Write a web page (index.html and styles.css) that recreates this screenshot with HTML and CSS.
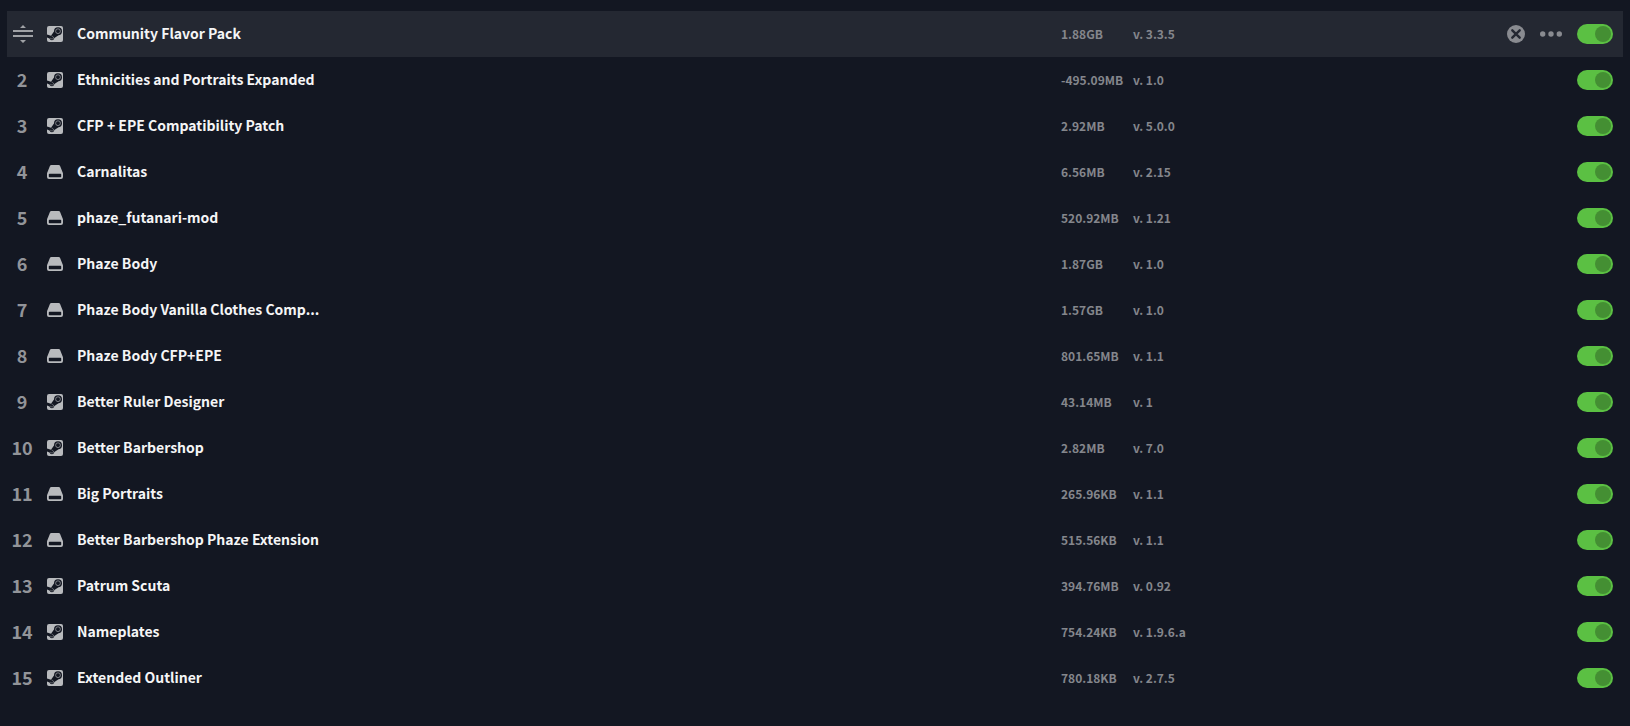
FILE: index.html
```
<!DOCTYPE html>
<html lang="en">
<head>
  <meta charset="utf-8">
  <title>Playset</title>
  <link rel="stylesheet" href="styles.css">
</head>
<body>
  <svg class="sprite" aria-hidden="true">
    <symbol id="steam" viewBox="0 0 16 16">
      <rect width="16" height="16" rx="2" fill="currentColor"/>
      <g class="cutout">
        <path d="M0 8.4 4 9.8 7 5.4 11.5 9.2 7.4 12A2.5 2.5 0 0 1 2.5 12.5L0 11.4Z"/>
        <circle cx="11" cy="5.2" r="4"/>
      </g>
      <circle cx="11" cy="5.2" r="2.4" fill="none" stroke="currentColor" stroke-width=".6"/>
      <path d="M3.2 12.2 4.7 12.9A1.3 1.3 0 0 0 5.7 10.5L4.6 10" fill="none" stroke="currentColor" stroke-width=".5"/>
    </symbol>
    <symbol id="drive" viewBox="0 0 16 16">
      <path fill="currentColor" fill-rule="evenodd" d="M4.4 1h7.2a1.6 1.6 0 0 1 1.5 1.1L15.7 8.6a3 3 0 0 1 .3 1.2V13a2 2 0 0 1-2 2H2a2 2 0 0 1-2-2V9.8a3 3 0 0 1 .3-1.2L2.9 2.1A1.6 1.6 0 0 1 4.4 1ZM2.5 9.8a.7.7 0 0 0-.7.7v2a.7.7 0 0 0 .7.7h11a.7.7 0 0 0 .7-.7v-2a.7.7 0 0 0-.7-.7Z"/>
    </symbol>
  </svg>

  <ul class="mod-list">
    <li class="mod active">
      <button class="drag-handle" aria-label="Reorder">
        <svg width="20" height="20" viewBox="0 0 20 20" fill="currentColor">
          <path d="M10 1 13 4H7ZM10 19 7 16H13ZM0 6h20v2H0ZM0 11h20v2H0Z"/>
        </svg>
      </button>
      <svg class="source"><use href="#steam"/></svg>
      <label class="name" for="mod1">Community Flavor Pack</label>
      <span class="size">1.88GB</span>
      <span class="version">v. 3.3.5</span>
      <div class="actions">
        <button aria-label="Remove">
          <svg width="18" height="18" viewBox="0 0 18 18">
            <circle cx="9" cy="9" r="9" fill="currentColor"/>
            <path class="cross" d="M5.3 5.3 12.7 12.7M12.7 5.3 5.3 12.7"/>
          </svg>
        </button>
        <button aria-label="More">
          <svg width="22" height="6" viewBox="0 0 22 6" fill="currentColor">
            <circle cx="2.7" cy="3" r="2.7"/><circle cx="11" cy="3" r="2.7"/><circle cx="19.3" cy="3" r="2.7"/>
          </svg>
        </button>
      </div>
      <input class="toggle" type="checkbox" id="mod1" checked>
    </li>
    <li class="mod">
      <span class="order">2</span>
      <svg class="source"><use href="#steam"/></svg>
      <label class="name" for="mod2">Ethnicities and Portraits Expanded</label>
      <span class="size">-495.09MB</span>
      <span class="version">v. 1.0</span>
      <input class="toggle" type="checkbox" id="mod2" checked>
    </li>
    <li class="mod">
      <span class="order">3</span>
      <svg class="source"><use href="#steam"/></svg>
      <label class="name" for="mod3">CFP + EPE Compatibility Patch</label>
      <span class="size">2.92MB</span>
      <span class="version">v. 5.0.0</span>
      <input class="toggle" type="checkbox" id="mod3" checked>
    </li>
    <li class="mod">
      <span class="order">4</span>
      <svg class="source"><use href="#drive"/></svg>
      <label class="name" for="mod4">Carnalitas</label>
      <span class="size">6.56MB</span>
      <span class="version">v. 2.15</span>
      <input class="toggle" type="checkbox" id="mod4" checked>
    </li>
    <li class="mod">
      <span class="order">5</span>
      <svg class="source"><use href="#drive"/></svg>
      <label class="name" for="mod5">phaze_futanari-mod</label>
      <span class="size">520.92MB</span>
      <span class="version">v. 1.21</span>
      <input class="toggle" type="checkbox" id="mod5" checked>
    </li>
    <li class="mod">
      <span class="order">6</span>
      <svg class="source"><use href="#drive"/></svg>
      <label class="name" for="mod6">Phaze Body</label>
      <span class="size">1.87GB</span>
      <span class="version">v. 1.0</span>
      <input class="toggle" type="checkbox" id="mod6" checked>
    </li>
    <li class="mod">
      <span class="order">7</span>
      <svg class="source"><use href="#drive"/></svg>
      <label class="name" for="mod7">Phaze Body Vanilla Clothes Comp...</label>
      <span class="size">1.57GB</span>
      <span class="version">v. 1.0</span>
      <input class="toggle" type="checkbox" id="mod7" checked>
    </li>
    <li class="mod">
      <span class="order">8</span>
      <svg class="source"><use href="#drive"/></svg>
      <label class="name" for="mod8">Phaze Body CFP+EPE</label>
      <span class="size">801.65MB</span>
      <span class="version">v. 1.1</span>
      <input class="toggle" type="checkbox" id="mod8" checked>
    </li>
    <li class="mod">
      <span class="order">9</span>
      <svg class="source"><use href="#steam"/></svg>
      <label class="name" for="mod9">Better Ruler Designer</label>
      <span class="size">43.14MB</span>
      <span class="version">v. 1</span>
      <input class="toggle" type="checkbox" id="mod9" checked>
    </li>
    <li class="mod">
      <span class="order">10</span>
      <svg class="source"><use href="#steam"/></svg>
      <label class="name" for="mod10">Better Barbershop</label>
      <span class="size">2.82MB</span>
      <span class="version">v. 7.0</span>
      <input class="toggle" type="checkbox" id="mod10" checked>
    </li>
    <li class="mod">
      <span class="order">11</span>
      <svg class="source"><use href="#drive"/></svg>
      <label class="name" for="mod11">Big Portraits</label>
      <span class="size">265.96KB</span>
      <span class="version">v. 1.1</span>
      <input class="toggle" type="checkbox" id="mod11" checked>
    </li>
    <li class="mod">
      <span class="order">12</span>
      <svg class="source"><use href="#drive"/></svg>
      <label class="name" for="mod12">Better Barbershop Phaze Extension</label>
      <span class="size">515.56KB</span>
      <span class="version">v. 1.1</span>
      <input class="toggle" type="checkbox" id="mod12" checked>
    </li>
    <li class="mod">
      <span class="order">13</span>
      <svg class="source"><use href="#steam"/></svg>
      <label class="name" for="mod13">Patrum Scuta</label>
      <span class="size">394.76MB</span>
      <span class="version">v. 0.92</span>
      <input class="toggle" type="checkbox" id="mod13" checked>
    </li>
    <li class="mod">
      <span class="order">14</span>
      <svg class="source"><use href="#steam"/></svg>
      <label class="name" for="mod14">Nameplates</label>
      <span class="size">754.24KB</span>
      <span class="version">v. 1.9.6.a</span>
      <input class="toggle" type="checkbox" id="mod14" checked>
    </li>
    <li class="mod">
      <span class="order">15</span>
      <svg class="source"><use href="#steam"/></svg>
      <label class="name" for="mod15">Extended Outliner</label>
      <span class="size">780.18KB</span>
      <span class="version">v. 2.7.5</span>
      <input class="toggle" type="checkbox" id="mod15" checked>
    </li>
  </ul>
</body>
</html>
```

FILE: styles.css
```
:root {
  --background-color: #131722;
  --row-active: #242832;
  --text-color: #f5f5f6;
  --muted-color: #898b90;
  --icon-color: #b8babd;
  --toggle-on: #5bc043;
  --toggle-knob: #448f33;
}

body {
  margin: 0;
  padding: 11px 7px;
  background-color: var(--background-color);
  color: var(--text-color);
  font-family: "Noto Sans CJK SC", "Noto Sans", sans-serif;
}

.sprite {
  display: none;
}

.mod-list {
  margin: 0;
  padding: 0;
  list-style: none;
}

/* name and version columns share the free width */
.mod {
  display: grid;
  grid-template-columns: 32px 30px minmax(0, 992fr) 72px minmax(80px, 324fr) 120px 46px;
  align-items: center;
  height: 46px;
}

.mod.active {
  background-color: var(--row-active);
}

button {
  display: flex;
  padding: 0;
  border: none;
  background: none;
  color: var(--muted-color);
  cursor: pointer;
}

.order,
.drag-handle {
  justify-content: center;
  text-align: center;
}

.order {
  padding: 0 2px 2px 0;
  color: #929499;
  font-size: 18px;
  font-weight: 700;
  line-height: 24px;
}

.drag-handle {
  color: #a0a2a6;
  cursor: grab;
}

.source {
  width: 16px;
  height: 16px;
  margin-left: 8px;
  color: var(--icon-color);
}

.cutout {
  fill: var(--background-color);
}

.name {
  padding: 0 0 2px 8px;
  overflow: hidden;
  font-size: 14px;
  font-weight: 700;
  line-height: 22px;
  text-overflow: ellipsis;
  white-space: nowrap;
}

.size,
.version {
  color: #84868c;
  font-size: 12px;
  font-weight: 700;
  line-height: 18px;
  white-space: nowrap;
}

.actions {
  display: flex;
  align-items: center;
  justify-content: flex-end;
  gap: 15px;
  padding-right: 15px;
}

.cross {
  fill: none;
  stroke: var(--row-active);
  stroke-width: 2.4;
  stroke-linecap: round;
}

.toggle {
  grid-column: 7;
  display: flex;
  align-items: center;
  justify-content: flex-end;
  width: 36px;
  height: 20px;
  margin: 0;
  padding: 2px;
  box-sizing: border-box;
  border-radius: 10px;
  background-color: #4a4d55;
  appearance: none;
  cursor: pointer;
}

.toggle:checked {
  background-color: var(--toggle-on);
}

.toggle::before {
  content: "";
  width: 16px;
  height: 16px;
  border-radius: 50%;
  background-color: var(--toggle-knob);
}

.toggle:not(:checked) {
  justify-content: flex-start;
}
```
